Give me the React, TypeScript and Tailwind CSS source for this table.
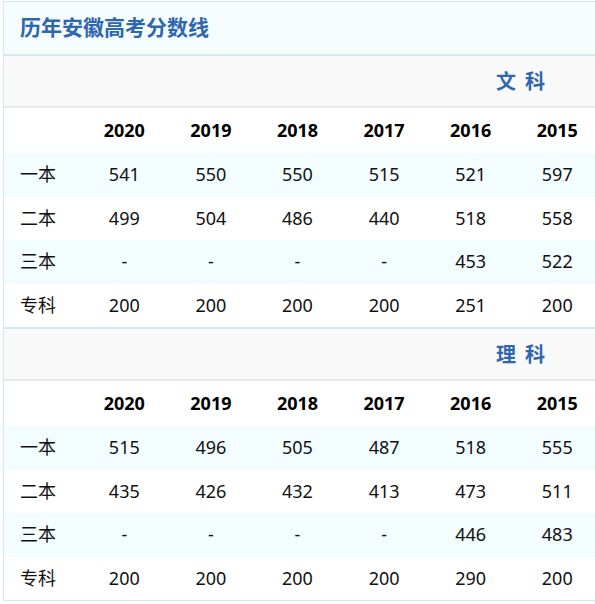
const years = ["2020", "2019", "2018", "2017", "2016", "2015"];

type Row = { label: string; values: string[] };

const sections: { title: string; rows: Row[] }[] = [
  {
    title: "文科",
    rows: [
      { label: "一本", values: ["541", "550", "550", "515", "521", "597"] },
      { label: "二本", values: ["499", "504", "486", "440", "518", "558"] },
      { label: "三本", values: ["-", "-", "-", "-", "453", "522"] },
      { label: "专科", values: ["200", "200", "200", "200", "251", "200"] },
    ],
  },
  {
    title: "理科",
    rows: [
      { label: "一本", values: ["515", "496", "505", "487", "518", "555"] },
      { label: "二本", values: ["435", "426", "432", "413", "473", "511"] },
      { label: "三本", values: ["-", "-", "-", "-", "446", "483"] },
      { label: "专科", values: ["200", "200", "200", "200", "290", "200"] },
    ],
  },
];

const grid = "grid grid-cols-[77px_repeat(6,86.6px)] items-center";

function Section({ title, rows, last }: { title: string; rows: Row[]; last: boolean }) {
  return (
    <div className={last ? "" : "border-b-2 border-[#d4e9f7]"}>
      <div className="flex h-[52px] items-center justify-end border-b-2 border-[#e8e8e8] bg-[#f9f9f9] pt-[2px] pr-[50px]">
        <span className="text-[20px] font-bold tracking-[9px] text-[#2f66b0]">{title}</span>
      </div>
      <div className={`${grid} h-[45px] bg-white text-[18px] font-bold text-black`}>
        <div />
        {years.map((y) => (
          <div key={y} className="text-center">
            {y}
          </div>
        ))}
      </div>
      {rows.map((r, i) => (
        <div
          key={r.label}
          className={`${grid} h-[43.5px] text-[18px] text-[#111] ${i % 2 === 0 ? "bg-[#f3fdff]" : "bg-white"}`}
        >
          <div className="pl-4">{r.label}</div>
          {r.values.map((v, j) => (
            <div key={j} className="text-center">
              {v}
            </div>
          ))}
        </div>
      ))}
    </div>
  );
}

export default function App() {
  return (
    <div
      className="h-[604px] w-[595px] overflow-hidden bg-white pt-px pl-[3px]"
      style={{ fontFamily: '"Noto Sans", "Noto Sans CJK SC", sans-serif' }}
    >
      <div className="w-[602px] border border-[#d4e9f7]">
        <div className="flex h-[54px] items-center border-b-2 border-[#d4e9f7] bg-[#f5fdff] pl-4">
          <h1 className="text-[21px] font-bold text-[#2f66b0]">历年安徽高考分数线</h1>
        </div>
        {sections.map((s, i) => (
          <Section key={s.title} title={s.title} rows={s.rows} last={i === sections.length - 1} />
        ))}
      </div>
    </div>
  );
}
